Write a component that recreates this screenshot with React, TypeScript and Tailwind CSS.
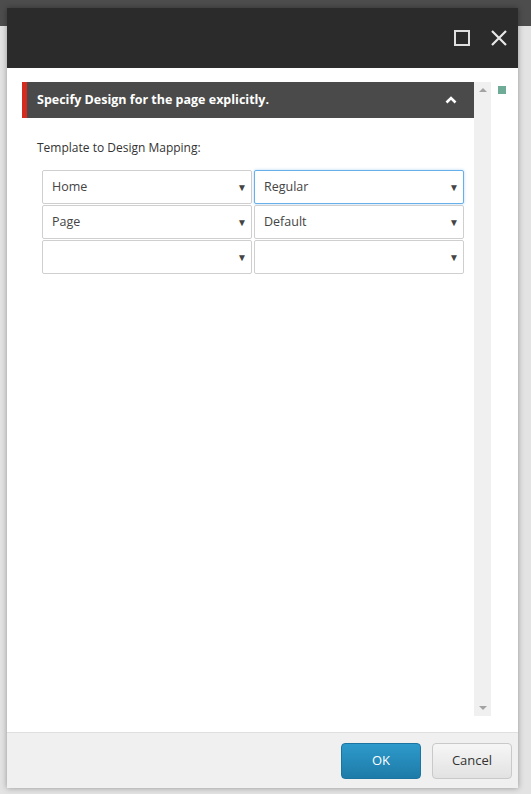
const rows = [
  ['Home', 'Regular'],
  ['Page', 'Default'],
  ['', ''],
];

const SelectBox = ({ value, focused }: { value: string; focused?: boolean }) => (
  <div
    className={
      'flex items-center justify-between h-[34px] pl-[9px] pr-[4px] bg-white rounded-[2px] border ' +
      (focused ? 'border-[#66afe9] shadow-[0_0_3px_rgba(102,175,233,0.5)]' : 'border-[#cfcfcf]')
    }
  >
    <span className="text-[12.5px] text-[#444]">{value}</span>
    <span className="text-[10px] text-[#444]">▼</span>
  </div>
);

const App = () => {
  return (
    <div
      className="w-[531px] h-[794px] overflow-hidden bg-[linear-gradient(#4d4d4d_0_26px,#e3e3e3_26px)] pt-[8px] pl-[7px]"
      style={{ fontFamily: '"Open Sans", "Noto Sans", sans-serif' }}
    >
      <div className="w-[511px] h-[780px] flex flex-col bg-white shadow-[0_0_6px_rgba(0,0,0,0.35)]">
        {/* title bar */}
        <div className="h-[60px] bg-[#2b2b2b] flex items-center justify-end pr-[8px] gap-[20px] shrink-0">
          <div className="w-[16px] h-[16px] border-2 border-[#e0e0e0]" />
          <svg width="18" height="18" viewBox="0 0 18 18" className="mr-[2px]">
            <path d="M2 2 L16 16 M16 2 L2 16" stroke="#e8e8e8" strokeWidth="2.2" />
          </svg>
        </div>

        {/* body */}
        <div className="flex-1 flex pt-[14px] pl-[15px] pb-[16px]">
          <div className="w-[452px] flex flex-col">
            <div className="h-[36px] bg-[#4a4a4a] border-l-[5px] border-[#d52b1e] flex items-center justify-between pl-[10px] pr-[17px]">
              <span className="text-[12.5px] font-bold text-white">Specify Design for the page explicitly.</span>
              <svg width="12" height="8" viewBox="0 0 12 8">
                <path d="M1.5 6.5 L6 2 L10.5 6.5" stroke="#fff" strokeWidth="2.6" fill="none" />
              </svg>
            </div>
            <div className="pl-[15px] pt-[21px] text-[12px] text-[#333]">Template to Design Mapping:</div>
            <div className="ml-[20px] mt-[13px] w-[422px] grid grid-cols-2 gap-x-[2px] gap-y-[1px]">
              {rows.map((r, i) => (
                <div key={i} className="contents">
                  <SelectBox value={r[0]} />
                  <SelectBox value={r[1]} focused={i === 0} />
                </div>
              ))}
            </div>
          </div>

          {/* scrollbar */}
          <div className="w-[17px] bg-[#f0f0f0] flex flex-col items-center justify-between py-[6px]">
            <div className="w-0 h-0 border-x-[4px] border-x-transparent border-b-[4px] border-b-[#a3a3a3]" />
            <div className="w-0 h-0 border-x-[4px] border-x-transparent border-t-[4px] border-t-[#a3a3a3]" />
          </div>

          <div className="pl-[7px] pt-[4px]">
            <div className="w-[8px] h-[8px] bg-[#6fac97]" />
          </div>
        </div>

        {/* footer */}
        <div className="h-[56px] bg-[#f0f0f0] border-t border-[#e0e0e0] flex items-center justify-end gap-[11px] pr-[6px] shrink-0">
          <button className="w-[80px] h-[36px] rounded-[4px] text-[13px] text-white bg-[linear-gradient(#2d9acb,#1e7ba8)] border border-[#1c74a0]">
            OK
          </button>
          <button className="w-[80px] h-[36px] rounded-[4px] text-[13px] text-[#333] bg-[linear-gradient(#f6f6f6,#e2e2e2)] border border-[#c9c9c9]">
            Cancel
          </button>
        </div>
      </div>
    </div>
  );
};

export default App;
